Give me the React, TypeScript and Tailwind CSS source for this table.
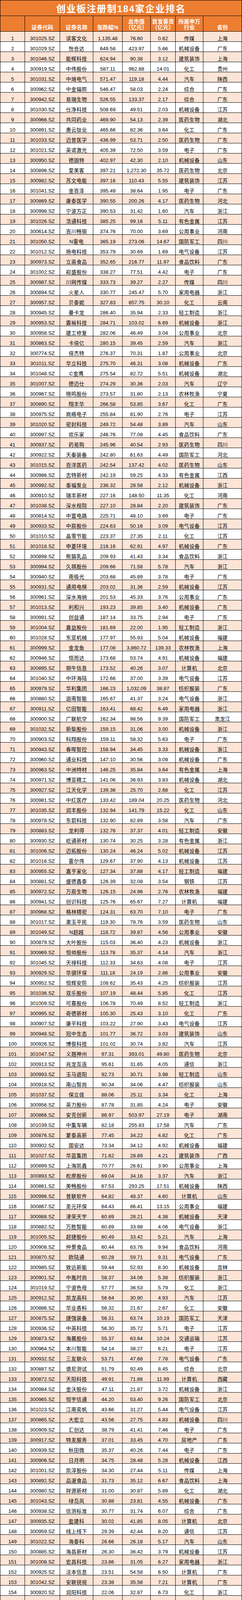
import clsx from "clsx"

// 创业板注册制 184 家企业排名 —— 证券代码|名称|涨跌幅|总市值|募资|行业|省份
const RAW = `301025.SZ|读客文化|1,135.48|76.60|0.62|传媒|上海
301029.SZ|怡合达|649.58|423.97|5.66|机械设备|广东
301046.SZ|能辉科技|624.94|90.38|3.12|建筑装饰|上海
300919.SZ|中伟股份|587.11|962.88|14.01|化工|贵州
301031.SZ|中熔电气|571.47|119.18|4.44|汽车|陕西
300962.SZ|中金辐照|546.47|58.03|2.24|综合|广东
300942.SZ|易瑞生物|526.55|133.37|2.17|综合|广东
301030.SZ|仕净科技|508.69|49.51|2.03|机械设备|江苏
300966.SZ|共同药业|469.90|54.13|2.39|医药生物|湖北
300891.SZ|惠云钛业|465.66|82.36|3.64|化工|广东
301033.SZ|迈普医学|436.99|53.71|2.50|医药生物|广东
301021.SZ|英诺激光|405.39|72.50|3.59|电子|广东
300950.SZ|德固特|402.97|42.30|2.10|机械设备|山东
300896.SZ|爱美客|397.21|1,272.30|35.72|医药生物|北京
300982.SZ|苏文电能|397.16|110.43|5.55|建筑装饰|江苏
301041.SZ|金百泽|395.49|38.64|1.95|电子|广东
300869.SZ|康泰医学|390.55|200.26|4.17|医药生物|河北
300998.SZ|宁波方正|390.53|31.42|1.60|汽车|浙江
301026.SZ|浩通科技|385.25|99.16|5.11|有色金属|江苏
300614.SZ|百川畅银|374.76|70.00|3.69|公用事业|河南
301050.SZ|N雷电|365.19|273.06|14.67|国防军工|四川
301012.SZ|扬电科技|353.79|30.69|1.69|电气设备|江苏
300973.SZ|立高食品|352.65|216.77|11.97|食品饮料|广东
301002.SZ|崧盛股份|338.27|77.51|4.42|电子|广东
300987.SZ|川网传媒|333.73|39.27|2.27|传媒|四川
300894.SZ|火星人|330.77|245.47|5.70|家用电器|浙江
300957.SZ|贝泰妮|327.83|857.75|30.10|化工|云南
300945.SZ|曼卡龙|286.40|35.94|2.33|轻工制造|浙江
300953.SZ|震裕科技|284.71|103.02|6.69|机械设备|浙江
300958.SZ|建工修复|282.06|46.49|3.04|公用事业|北京
300863.SZ|卡倍亿|280.15|39.45|2.59|汽车|浙江
300774.SZ|倍杰特|276.37|70.31|1.87|公用事业|北京
301011.SZ|华立科技|275.70|46.31|3.08|机械设备|广东
301048.SZ|C金鹰|275.54|82.72|5.51|机械设备|湖北
301007.SZ|德迈仕|274.29|30.36|2.03|汽车|辽宁
300967.SZ|晓鸣股份|273.57|31.80|2.13|农林牧渔|宁夏
300890.SZ|翔丰华|266.58|53.85|3.67|化工|广东
300975.SZ|商络电子|255.84|81.90|2.76|电子|江苏
301020.SZ|密封科技|249.72|54.48|3.89|汽车|山东
300997.SZ|欢乐家|246.76|77.08|4.45|食品饮料|广东
300937.SZ|药易购|245.96|40.54|2.93|医药生物|四川
300922.SZ|天秦装备|242.80|61.63|4.49|国防军工|河北
301015.SZ|百洋医药|242.54|137.42|4.02|医药生物|山东
300986.SZ|志特新材|242.19|59.25|4.33|有色金属|江西
300992.SZ|泰福泵业|236.32|28.58|2.12|机械设备|浙江
300910.SZ|瑞丰新材|227.16|148.50|11.35|化工|河南
301038.SZ|深水规院|227.10|28.84|2.20|建筑装饰|广东
300814.SZ|中富电路|225.71|48.10|3.69|电子|广东
300933.SZ|中辰股份|224.63|50.16|3.09|电气设备|江苏
301010.SZ|晶雪节能|223.37|27.35|2.11|化工|江苏
301018.SZ|申菱环境|216.16|62.91|4.97|机械设备|广东
300898.SZ|熊猫乳品|209.93|41.43|3.34|食品饮料|浙江
300994.SZ|久祺股份|209.66|71.58|5.78|汽车|浙江
300940.SZ|南极光|203.68|45.89|3.78|电子|广东
300931.SZ|通用电梯|203.02|31.36|2.59|机械设备|江苏
300961.SZ|深水海纳|201.53|45.33|3.76|公用事业|广东
301013.SZ|利和兴|193.23|39.85|3.40|机械设备|广东
300991.SZ|创益通|187.14|33.75|2.94|电子|广东
301004.SZ|嘉益股份|181.69|22.00|1.95|轻工制造|浙江
301028.SZ|东亚机械|177.97|55.93|5.04|机械设备|福建
300999.SZ|金龙鱼|177.08|3,860.72|139.33|农林牧渔|上海
300946.SZ|恒而达|173.68|53.74|4.91|机械设备|福建
300895.SZ|铜牛信息|173.52|40.26|3.07|计算机|北京
301040.SZ|中环海陆|172.66|37.00|3.39|电气设备|江苏
300979.SZ|华利集团|166.23|1,032.09|38.87|纺织服装|广东
300880.SZ|迦南智能|165.67|41.37|3.24|电气设备|浙江
300911.SZ|亿田智能|163.41|68.42|6.49|家用电器|浙江
300900.SZ|广联航空|162.34|98.56|9.39|国防军工|黑龙江
301032.SZ|新柴股份|159.15|31.06|3.00|机械设备|浙江
300903.SZ|科翔股份|159.11|58.32|5.63|电子|广东
300943.SZ|春晖智控|158.94|34.45|3.33|机械设备|浙江
300960.SZ|通业科技|147.10|30.56|3.09|机械设备|广东
300963.SZ|中洲特材|146.25|35.84|3.64|有色金属|上海
300971.SZ|博亚精工|141.06|36.93|3.83|机械设备|湖北
300927.SZ|江天化学|139.36|25.70|2.68|化工|江苏
300981.SZ|中红医疗|133.42|189.04|20.25|医药生物|河北
301035.SZ|润丰股份|132.94|141.79|15.22|化工|山东
300978.SZ|东箭科技|132.90|82.89|3.58|汽车|广东
300883.SZ|龙利得|132.76|37.37|4.01|轻工制造|安徽
300930.SZ|屹通新材|130.74|30.25|3.28|有色金属|浙江
301006.SZ|迈拓股份|130.24|46.24|5.02|机械设备|江苏
301016.SZ|雷尔伟|129.67|37.90|4.13|机械设备|江苏
300955.SZ|嘉亨家化|127.34|37.88|4.17|轻工制造|福建
300881.SZ|盛德鑫泰|126.39|32.08|3.54|钢铁|江苏
300972.SZ|万辰生物|126.15|24.96|2.76|农林牧渔|福建
300941.SZ|创识科技|125.76|65.67|7.27|计算机|福建
300968.SZ|格林精密|124.31|63.70|7.10|电子|广东
301017.SZ|漱玉平民|119.30|78.76|3.59|医药生物|山东
301049.SZ|N超越|118.72|39.87|4.56|公用事业|安徽
300879.SZ|大叶股份|115.03|36.40|4.23|机械设备|浙江
300969.SZ|恒帅股份|113.78|35.37|4.14|汽车|浙江
301045.SZ|天禄科技|112.33|34.63|4.08|电子|江苏
300929.SZ|华骐环保|111.18|24.19|2.86|公用事业|安徽
300952.SZ|恒辉安防|108.62|35.43|4.25|纺织服装|江苏
301036.SZ|双乐股份|107.19|48.44|5.85|化工|江苏
301009.SZ|可靠股份|106.78|70.49|8.52|轻工制造|浙江
300995.SZ|奇德新材|105.30|25.43|3.10|化工|广东
300907.SZ|康平科技|103.22|27.90|3.43|电气设备|江苏
300948.SZ|冠中生态|101.77|36.72|3.03|建筑装饰|山东
300926.SZ|博俊科技|101.02|30.74|3.82|汽车|江苏
301047.SZ|义翘神州|97.31|393.01|49.80|医药生物|北京
300913.SZ|兆龙互连|95.61|31.65|4.05|通信|浙江
300993.SZ|玉马遮阳|92.73|30.71|3.98|轻工制造|山东
300918.SZ|南山智尚|90.34|34.06|4.47|纺织服装|山东
301037.SZ|保立佳|88.06|25.11|3.34|化工|上海
300956.SZ|英力股份|87.78|31.85|4.24|电子|安徽
300866.SZ|安克创新|86.97|503.97|27.19|电子|湖南
301039.SZ|中集车辆|82.18|255.83|17.58|汽车|广东
300876.SZ|蒙泰高新|77.45|34.22|4.82|化工|广东
300902.SZ|国安达|73.34|34.12|4.92|机械设备|福建
301027.SZ|华蓝集团|71.62|28.89|4.21|建筑装饰|广西
300899.SZ|上海凯鑫|70.77|26.61|3.90|公用事业|上海
300893.SZ|松原股份|69.04|34.16|3.37|汽车|浙江
300861.SZ|美畅股份|67.53|293.25|17.51|机械设备|陕西
300996.SZ|普联软件|64.82|48.37|4.60|计算机|山东
300867.SZ|圣元环保|64.43|86.41|13.15|公用事业|福建
300988.SZ|津荣天宇|60.89|28.21|4.38|机械设备|天津
300882.SZ|万胜智能|60.89|33.98|4.06|电气设备|浙江
301005.SZ|超捷股份|60.49|33.42|5.21|汽车|上海
300908.SZ|仲景食品|60.44|63.76|9.94|食品饮料|河南
300870.SZ|欧陆通|60.28|59.71|9.31|电气设备|广东
300985.SZ|致远新能|59.44|52.93|8.30|机械设备|吉林
300901.SZ|中胤时尚|58.37|34.06|5.38|纺织服装|浙江
301019.SZ|宁波色母|57.77|36.53|5.79|化工|浙江
300912.SZ|凯龙高科|56.64|30.90|4.93|汽车|江苏
300886.SZ|华业香料|56.32|21.67|2.67|化工|安徽
300875.SZ|捷强装备|56.31|63.74|10.19|国防军工|天津
300936.SZ|中英科技|56.30|35.72|5.71|电子|江苏
300873.SZ|海晨股份|55.37|63.64|10.24|交通运输|江苏
300964.SZ|本川智能|54.14|38.27|6.21|电子|江苏
300932.SZ|三友联众|53.71|47.68|7.78|电气设备|广东
300887.SZ|谱尼测试|51.79|92.49|8.45|综合|北京
300872.SZ|天阳科技|49.91|71.88|11.99|计算机|西藏
300984.SZ|金沃股份|47.11|21.87|3.72|机械设备|浙江
300965.SZ|恒宇信通|44.20|53.40|9.26|国防军工|北京
301023.SZ|江南奕帆|43.66|31.27|5.44|电气设备|江苏
300865.SZ|大宏立|43.56|27.75|4.83|机械设备|四川
300909.SZ|汇创达|38.79|41.41|7.46|电子|广东
300917.SZ|特发服务|37.01|33.45|4.70|房地产|广东
300939.SZ|秋田微|35.37|40.26|7.44|电子|广东
300906.SZ|日月明|34.75|28.48|5.28|机械设备|江西
301001.SZ|凯淳股份|34.30|27.44|5.11|传媒|上海
300892.SZ|品渥食品|31.73|35.12|6.67|食品饮料|上海
300980.SZ|祥源新材|31.00|30.87|5.89|化工|湖北
301043.SZ|绿岛风|30.88|23.81|4.55|机械设备|广东
300938.SZ|信测标准|30.77|31.74|6.07|综合|广东
300935.SZ|盈建科|30.02|41.85|8.05|计算机|北京
300959.SZ|线上线下|29.39|42.44|8.20|通信|江苏
301022.SZ|海泰科|26.66|26.18|5.17|汽车|山东
300885.SZ|海昌新材|26.30|36.42|3.79|机械设备|江苏
301008.SZ|宏昌科技|23.86|31.05|6.27|家用电器|浙江
300925.SZ|法本信息|23.51|54.58|6.50|计算机|广东
301042.SZ|安联锐视|23.38|35.58|7.21|计算机|广东
300920.SZ|润阳科技|22.06|32.87|6.73|化工|浙江
300888.SZ|稳健医疗|16.02|367.64|37.15|纺织服装|广东
300951.SZ|博硕科技|15.99|69.76|15.04|电子|广东
300990.SZ|同飞股份|14.13|50.74|11.12|机械设备|河北
300862.SZ|蓝盾光电|13.05|50.61|11.19|机械设备|安徽
300871.SZ|回盛生物|12.88|62.89|9.31|农林牧渔|湖北
300923.SZ|研奥股份|11.56|24.80|5.56|机械设备|吉林
300916.SZ|朗特智能|11.46|40.24|6.02|电子|广东
300928.SZ|华安鑫创|11.06|33.81|7.61|汽车|北京
300878.SZ|维康药业|9.39|36.37|8.31|医药生物|浙江
301000.SZ|肇民科技|9.21|37.46|8.57|汽车|上海
301003.SZ|江苏博云|8.54|35.34|8.14|化工|江苏
301024.SZ|霍普股份|8.00|22.21|5.14|建筑装饰|上海
300897.SZ|山科智能|6.99|24.34|5.69|机械设备|浙江
300877.SZ|金春股份|5.89|38.81|9.16|纺织服装|安徽
300884.SZ|狄耐克|-3.22|43.33|7.46|计算机|福建
300949.SZ|奥雅设计|-6.32|30.48|8.13|建筑装饰|广东
300844.SZ|山水比德|-9.24|29.42|8.10|建筑装饰|广东
300989.SZ|蕾奥规划|-13.23|26.87|7.74|建筑装饰|广东
300889.SZ|爱克股份|-17.88|35.83|10.91|电子|广东
300977.SZ|深圳瑞捷|-23.60|46.03|10.04|综合|广东
300983.SZ|尤安设计|-26.23|71.30|24.16|建筑装饰|上海
300915.SZ|海融科技|-27.30|45.82|10.50|食品饮料|上海
300921.SZ|南凌科技|-29.10|30.38|5.93|通信|广东
300864.SZ|南大环境|-32.51|44.14|8.61|公用事业|江苏
300905.SZ|宝丽迪|-34.67|46.40|8.88|化工|江苏
300868.SZ|杰美特|-35.02|34.32|13.20|电子|广东
300947.SZ|德必集团|-39.21|25.30|6.94|商业贸易|上海
300970.SZ|华绿生物|-41.05|30.80|6.53|农林牧渔|江苏
300976.SZ|达瑞电子|-49.72|79.39|21.93|电子|广东
300860.SZ|锋尚文化|-67.77|60.91|24.87|休闲服务|北京`

const rows = RAW.trim().split("\n").map((line) => line.split("|"))

const cell =
  "flex h-[26px] items-end justify-center overflow-hidden border-r border-b border-black text-[13px] leading-[15px]"

function HeaderCell({ lines }: { lines: string[] }) {
  return (
    <div className="flex h-[40px] flex-col items-center justify-end overflow-hidden border-r border-b border-black bg-[#ed7d31] pb-[2px] text-[14px] leading-[15px] font-bold text-white">
      {lines.map((l) => (
        <span key={l}>{l}</span>
      ))}
    </div>
  )
}

export default function App() {
  return (
    <div className="grid w-[620px] grid-cols-[63px_90px_85px_75px_72px_64px_71px_99px] border-l border-black bg-white font-['Liberation_Sans','Noto_Sans_CJK_SC',sans-serif] text-black">
      <div className="col-span-8 flex h-[41px] items-center justify-center overflow-hidden border-t border-r border-b border-black bg-[#ed7d31] pt-[4px] text-[24px] leading-[30px] font-bold tracking-[2px] text-white">
        创业板注册制184家企业排名
      </div>

      <HeaderCell lines={[""]} />
      <HeaderCell lines={["证券代码"]} />
      <HeaderCell lines={["证券名称"]} />
      <HeaderCell lines={["张跌幅%"]} />
      <HeaderCell lines={["总市值", "（亿元）"]} />
      <HeaderCell lines={["首发募资", "（亿元）"]} />
      <HeaderCell lines={["所属申万", "行业"]} />
      <HeaderCell lines={["省份"]} />

      {rows.map((r, i) => {
        const bg = i % 2 === 0 ? "bg-[#fce4d6]" : "bg-white"
        return [
          <div key={r[0] + "n"} className={clsx(cell, bg)}>{i + 1}</div>,
          <div key={r[0] + "c"} className={clsx(cell, bg)}>{r[0]}</div>,
          <div key={r[0] + "m"} className={clsx(cell, bg, "tracking-[0.5px]")}>{r[1]}</div>,
          <div key={r[0] + "p"} className={clsx(cell, bg)}>{r[2]}</div>,
          <div key={r[0] + "v"} className={clsx(cell, bg)}>{r[3]}</div>,
          <div key={r[0] + "f"} className={clsx(cell, bg)}>{r[4]}</div>,
          <div key={r[0] + "i"} className={clsx(cell, bg, "tracking-[0.5px]")}>{r[5]}</div>,
          <div key={r[0] + "s"} className={clsx(cell, bg)}>{r[6]}</div>,
        ]
      })}

      <div className={cell} />
      <div className={cell} />
      <div className={clsx(cell, "tracking-[0.5px]")}>总和</div>
      <div className={cell} />
      <div className={cell}>19,419.24</div>
      <div className={cell}>1,420.70</div>
      <div className={cell} />
      <div className={cell} />
    </div>
  )
}
